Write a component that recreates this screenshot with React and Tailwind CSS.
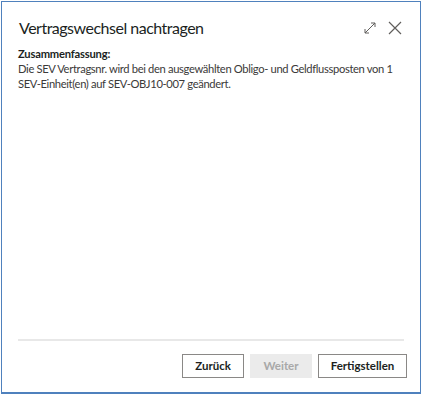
export default function App() {
	return (
		<div className="w-[423px] h-[395px] bg-white relative" style={{ fontFamily: 'Lato, "Noto Sans", sans-serif' }}>
			<div className="absolute left-[1px] top-[1px] w-[420px] h-[393px] border border-[#4f81bd] border-b-2 flex flex-col">
				{/* Header */}
				<div className="flex items-center justify-between pl-[17px] pr-[18px] pt-[15px]">
					<h1 className="text-[16px] text-[#201f1e] leading-[22px] tracking-[-0.5px]">Vertragswechsel nachtragen</h1>
					<div className="flex items-center gap-[12px] text-[#605e5c]">
						<svg width="12" height="12" viewBox="0 0 12 12" fill="none" stroke="currentColor" strokeWidth="1">
							<path d="M1 11L11 1M7 1h4v4M1 7v4h4" />
						</svg>
						<svg width="14" height="14" viewBox="0 0 14 14" fill="none" stroke="currentColor" strokeWidth="1.2">
							<path d="M1 1l12 12M13 1L1 13" />
						</svg>
					</div>
				</div>
				{/* Body */}
				<div className="px-[16px] pt-[7px] text-[11.2px] leading-[15px] tracking-[-0.35px] text-[#3b3a39] flex-1">
					<p className="font-bold text-[#201f1e] tracking-[-0.2px]">Zusammenfassung:</p>
					<p className="whitespace-nowrap">
						Die SEV Vertragsnr. wird bei den ausgewählten Obligo- und Geldflussposten von 1<br />
						SEV-Einheit(en) auf SEV-OBJ10-007 geändert.
					</p>
				</div>
				{/* Footer */}
				<div className="mx-[16px] border-t-2 border-[#e8e8e8]" />
				<div className="flex justify-end gap-[6px] pr-[13px] pt-[13px] pb-[14px]">
					<button className="w-[62px] h-[24px] border border-[#8a8886] text-[11.5px] font-bold text-[#201f1e] bg-white">Zurück</button>
					<button className="w-[62px] h-[24px] bg-[#ebebeb] text-[11.5px] font-bold text-[#a8a8a8]">Weiter</button>
					<button className="w-[89px] h-[24px] border border-[#8a8886] text-[11.5px] font-bold text-[#201f1e] bg-white">Fertigstellen</button>
				</div>
			</div>
		</div>
	);
}
